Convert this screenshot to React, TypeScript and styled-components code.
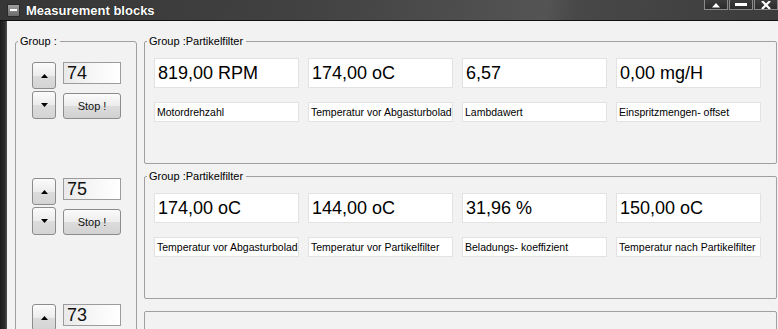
import React from 'react';
import styled, { createGlobalStyle } from 'styled-components';

const GlobalStyle = createGlobalStyle`
  html, body {
    margin: 0;
    padding: 0;
    width: 778px;
    height: 329px;
    overflow: hidden;
    background: #f2f2f2;
    font-family: 'Liberation Sans', Arial, sans-serif;
  }
`;

type Reading = { value: string; label: string };

const groups: { name: string; readings: Reading[] }[] = [
  {
    name: 'Group :Partikelfilter',
    readings: [
      { value: '819,00 RPM', label: 'Motordrehzahl' },
      { value: '174,00 oC', label: 'Temperatur vor Abgasturbolader' },
      { value: '6,57', label: 'Lambdawert' },
      { value: '0,00 mg/H', label: 'Einspritzmengen- offset' },
    ],
  },
  {
    name: 'Group :Partikelfilter',
    readings: [
      { value: '174,00 oC', label: 'Temperatur vor Abgasturbolader' },
      { value: '144,00 oC', label: 'Temperatur vor Partikelfilter' },
      { value: '31,96 %', label: 'Beladungs- koeffizient' },
      { value: '150,00 oC', label: 'Temperatur nach Partikelfilter' },
    ],
  },
];

const selectors = [
  { num: '74', top: 14 },
  { num: '75', top: 59 },
  { num: '73', top: 69 },
];

const App: React.FC = () => {
  return (
    <>
      <GlobalStyle />
      <Window>
        <TitleBar>
          <MenuBox>
            <span />
          </MenuBox>
          <Title>Measurement blocks</Title>
          <WinButtons>
            <WinButton>
              <svg width='10' height='6' viewBox='0 0 10 6'>
                <path d='M1 5.5 L5 1 L9 5.5 Z' fill='#fff' />
              </svg>
            </WinButton>
            <WinButton>
              <svg width='12' height='5' viewBox='0 0 12 5'>
                <rect x='0' y='1' width='12' height='3' fill='#fff' />
              </svg>
            </WinButton>
            <WinButton>
              <svg width='10' height='8' viewBox='0 0 10 8'>
                <path d='M1 0 L9 8 M9 0 L1 8' stroke='#fff' strokeWidth='2.2' />
              </svg>
            </WinButton>
          </WinButtons>
        </TitleBar>
        <Body>
          <Frame />
          <Content>
            <LeftBox>
              <Legend>Group :</Legend>
              {selectors.map((s) => (
                <SelectorRow key={s.num} $top={s.top}>
                  <SpinColumn>
                    <SpinButton>
                      <svg width='7' height='4' viewBox='0 0 7 4'>
                        <path d='M0 4 L3.5 0 L7 4 Z' fill='#000' />
                      </svg>
                    </SpinButton>
                    <SpinButton $tall>
                      <svg width='7' height='4' viewBox='0 0 7 4'>
                        <path d='M0 0 L7 0 L3.5 4 Z' fill='#000' />
                      </svg>
                    </SpinButton>
                  </SpinColumn>
                  <ControlColumn>
                    <NumberField>{s.num}</NumberField>
                    <StopButton>Stop !</StopButton>
                  </ControlColumn>
                </SelectorRow>
              ))}
            </LeftBox>
            <GroupColumn>
              {groups.map((g, i) => (
                <GroupBox key={i}>
                  <Legend>{g.name}</Legend>
                  <ReadingGrid>
                    {g.readings.map((r, j) => (
                      <ValueField key={j}>{r.value}</ValueField>
                    ))}
                    {g.readings.map((r, j) => (
                      <LabelField key={'l' + j}>{r.label}</LabelField>
                    ))}
                  </ReadingGrid>
                </GroupBox>
              ))}
              <GroupBox $empty />
            </GroupColumn>
          </Content>
        </Body>
      </Window>
    </>
  );
};

export default App;

const Window = styled.div`
  width: 778px;
  height: 329px;
  display: flex;
  flex-direction: column;
  overflow: hidden;
`;

const TitleBar = styled.div`
  height: 20px;
  flex-shrink: 0;
  display: flex;
  align-items: center;
  padding-left: 7px;
  background: linear-gradient(
    100deg,
    #363636 0%,
    #424242 40%,
    #545454 70%,
    #484848 74%,
    #3c3c3c 100%
  );
  border-bottom: 1px solid #111;
`;

const MenuBox = styled.div`
  width: 13px;
  height: 13px;
  background: linear-gradient(#a0a0a0, #6a6a6a);
  border: 1px solid #2a2a2a;
  box-sizing: border-box;
  display: flex;
  align-items: center;
  justify-content: center;

  & span {
    width: 7px;
    height: 2px;
    background: #fff;
  }
`;

const Title = styled.div`
  margin-left: 6px;
  color: #fff;
  font-weight: bold;
  font-size: 13px;
  flex: 1;
  text-shadow: 0 0 1px #000;
`;

const WinButtons = styled.div`
  align-self: flex-start;
  display: flex;
  gap: 1px;
`;

const WinButton = styled.div`
  width: 24px;
  height: 10px;
  box-sizing: border-box;
  border: 1px solid #8a8a8a;
  border-top: none;
  background: linear-gradient(#3c3c3c, #2c2c2c);
  display: flex;
  align-items: center;
  justify-content: center;
`;

const Body = styled.div`
  flex: 1;
  display: flex;
  min-height: 0;
`;

const Frame = styled.div`
  width: 7px;
  flex-shrink: 0;
  background: linear-gradient(90deg, #1c1c1c 0%, #2c2c2c 70%, #555 100%);
`;

const Content = styled.div`
  flex: 1;
  display: flex;
  gap: 7px;
  padding: 14px 1px 0 8px;
  background: #f2f2f2;
`;

const Legend = styled.legend`
  font-size: 11px;
  color: #000;
  padding: 0 3px 0 2px;
  margin-left: 2px;
  line-height: 13px;
`;

const LeftBox = styled.fieldset`
  width: 122px;
  box-sizing: border-box;
  margin: 0;
  padding: 0;
  border: 1px solid #a0a0a0;
  border-radius: 3px;
  height: 400px;
  min-width: 0;
`;

const SelectorRow = styled.div<{ $top: number }>`
  display: flex;
  gap: 7px;
  margin: ${({ $top }) => $top}px 0 0 16px;
`;

const SpinColumn = styled.div`
  display: flex;
  flex-direction: column;
  gap: 2px;
`;

const SpinButton = styled.div<{ $tall?: boolean }>`
  width: 24px;
  height: ${({ $tall }) => ($tall ? 28 : 27)}px;
  box-sizing: border-box;
  border: 1px solid #8c8c8c;
  border-radius: 3px;
  background: linear-gradient(#fbfbfb 0%, #ececec 50%, #dcdcdc 51%, #d4d4d4 100%);
  display: flex;
  align-items: center;
  justify-content: center;
`;

const ControlColumn = styled.div`
  display: flex;
  flex-direction: column;
  gap: 9px;
`;

const NumberField = styled.div`
  width: 58px;
  height: 22px;
  box-sizing: border-box;
  border: 1px solid #9c9c9c;
  background: linear-gradient(90deg, #e9e9e9 0%, #f6f6f6 50%, #fff 100%);
  font-size: 18px;
  line-height: 20px;
  padding-left: 3px;
  color: #111;
`;

const StopButton = styled.div`
  width: 58px;
  height: 26px;
  box-sizing: border-box;
  border: 1px solid #8c8c8c;
  border-radius: 3px;
  background: linear-gradient(#fbfbfb 0%, #ececec 50%, #dcdcdc 51%, #d2d2d2 100%);
  font-size: 11px;
  display: flex;
  align-items: center;
  justify-content: center;
  color: #111;
`;

const GroupColumn = styled.div`
  flex: 1;
  display: flex;
  flex-direction: column;
  gap: 6px;
`;

const GroupBox = styled.fieldset<{ $empty?: boolean }>`
  margin: 0;
  min-width: 0;
  box-sizing: border-box;
  height: ${({ $empty }) => ($empty ? 60 : 129)}px;
  margin-top: ${({ $empty }) => ($empty ? 6 : 0)}px;
  padding: 10px 0 0 0;
  border: 1px solid #a0a0a0;
  border-radius: 2px;
  flex-shrink: 0;
`;

const ReadingGrid = styled.div`
  display: grid;
  grid-template-columns: repeat(4, 145px);
  column-gap: 9px;
  row-gap: 14px;
  margin-left: 9px;
`;

const ValueField = styled.div`
  height: 30px;
  box-sizing: border-box;
  border: 1px solid #e2e2e2;
  background: #fff;
  font-size: 18px;
  line-height: 28px;
  padding-left: 3px;
  color: #000;
  white-space: nowrap;
  overflow: hidden;
`;

const LabelField = styled.div`
  height: 20px;
  box-sizing: border-box;
  border: 1px solid #e2e2e2;
  background: #fff;
  font-size: 10.5px;
  line-height: 18px;
  padding-left: 2px;
  color: #000;
  white-space: nowrap;
  overflow: hidden;
`;
